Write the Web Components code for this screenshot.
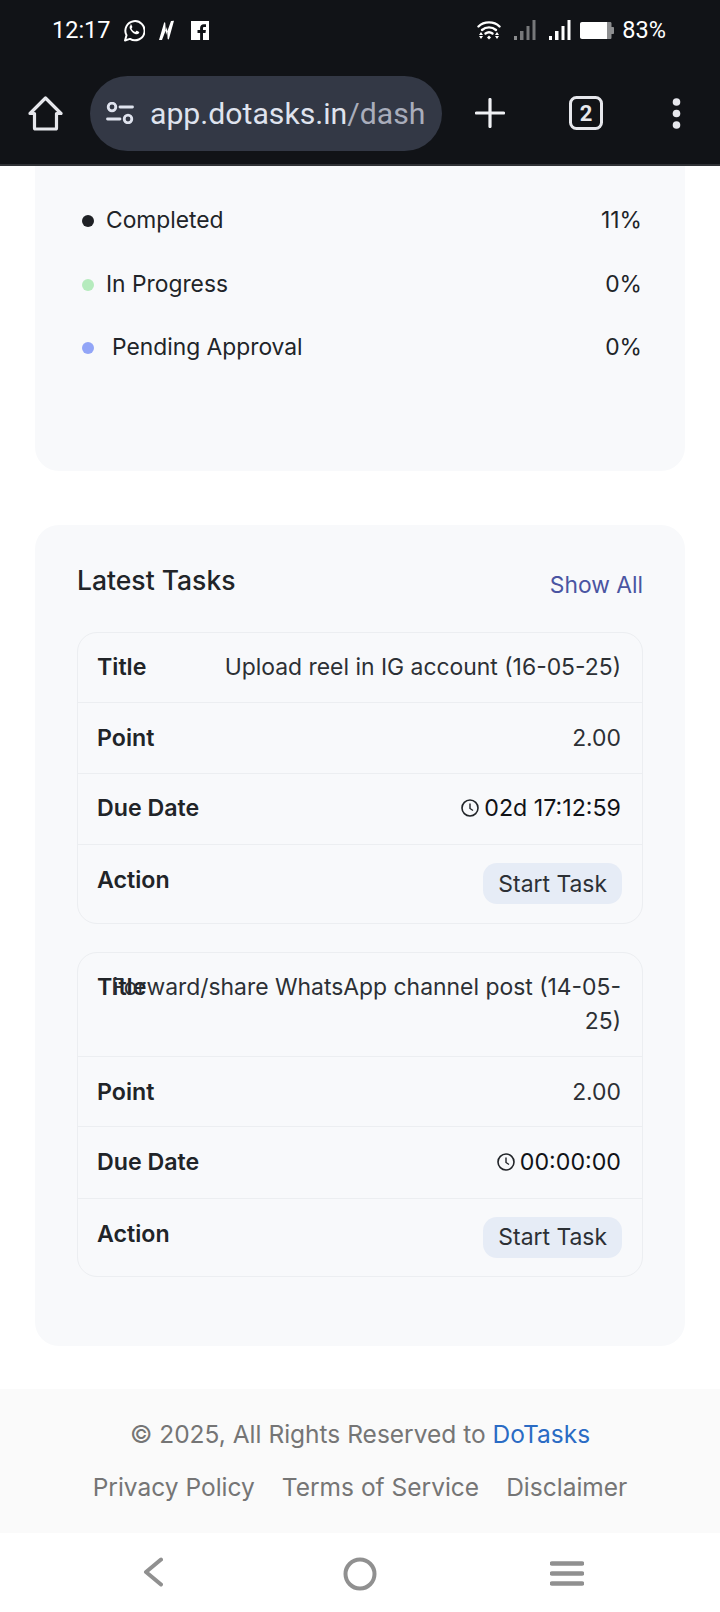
<!DOCTYPE html>
<html>
<head>
<meta charset="utf-8">
<title>DoTasks</title>
<style>
  html, body { margin: 0; padding: 0; background: #fff; }
  body { width: 720px; height: 1612px; overflow: hidden; display: flex; flex-direction: column; font-family: Inter, "Liberation Sans", sans-serif; }
</style>
</head>
<body>
<status-bar></status-bar>
<browser-bar></browser-bar>
<page-main>
  <stat-card class="first">
    <legend-row color="#1f2125" pct="11%">Completed</legend-row>
    <legend-row color="#b5ebbd" pct="0%">In Progress</legend-row>
    <legend-row color="#92a5f7" pct="0%" gap="30">Pending Approval</legend-row>
  </stat-card>
  <tasks-card>
    <task-table>
      <task-row label="Title" kind="title">Upload reel in IG account (16-05-25)</task-row>
      <task-row label="Point" kind="point" h="71">2.00</task-row>
      <task-row label="Due Date" kind="timer" h="71">02d 17:12:59</task-row>
      <task-row label="Action" kind="action">Start Task</task-row>
    </task-table>
    <task-table>
      <task-row label="Title" kind="title">Forward/share WhatsApp channel post (14-05-25)</task-row>
      <task-row label="Point" kind="point" h="70">2.00</task-row>
      <task-row label="Due Date" kind="timer" h="72" style="padding-top:18.500px">00:00:00</task-row>
      <task-row label="Action" kind="action">Start Task</task-row>
    </task-table>
  </tasks-card>
</page-main>
<site-footer></site-footer>
<nav-bar></nav-bar>

<script>
class StatusBar extends HTMLElement {
  constructor() {
    super();
    this.attachShadow({ mode: "open" });
    this.shadowRoot.innerHTML = `
    <style>
      :host { display: flex; align-items: center; height: 62px; padding: 0 54px 2px 52px; background: #111317; color: #fff; font-family: Roboto, sans-serif; font-size: 23.500px; box-sizing: border-box; flex: none; }
      svg { display: block; flex: none; }
      .left, .right { display: flex; align-items: center; }
      .right { margin-left: auto; }
    </style>
    <div class="left">
      <span>12:17</span>
      <svg style="margin-left:12px" width="22" height="23" viewBox="0 0 22 23"><path d="M2 21.500l1.500-5.300A9.600 9.600 0 1 1 7 19.900z" fill="none" stroke="#fff" stroke-width="2" stroke-linejoin="round"/><path d="M7.600 6.200c-1 .8-1.300 2.200-.6 3.800 1 2.300 2.900 4.100 5.100 5 1.600.6 3 .3 3.800-.7.400-.5.400-1 .3-1.300l-2.300-1.200c-.3-.1-.5 0-.7.200l-.8 1c-1.800-.7-3.100-1.900-3.900-3.600l.7-.9c.2-.2.200-.5.100-.7l-1-2.200c-.2-.4-.4-.4-.7-.4z" fill="#fff"/></svg>
      <svg style="margin-left:13px" width="17" height="21" viewBox="0 0 17 21"><path d="M1 20L6 3c.3-1 1.300-.8 1.300.2L8 15 13 1l3-.2-5 18c-.3 1-1.300.8-1.400-.2L9 7 4 20z" fill="#fff"/></svg>
      <svg style="margin-left:16px" width="18" height="19" viewBox="0 0 18 19"><path d="M0 0h18v19H12v-7h2.500l.4-3H12V7.300c0-.8.300-1.300 1.400-1.300H15V3.300c-.3 0-1.200-.1-2.200-.1-2.200 0-3.700 1.300-3.700 3.800V9H6.500v3h2.600v7H0z" fill="#fff"/></svg>
    </div>
    <div class="right">
      <svg width="24" height="20" viewBox="0 0 24 20"><g fill="none" stroke="#fff" stroke-width="2.400" stroke-linecap="round"><path d="M1.500 6.500C7 1 17 1 22.500 6.500"/><path d="M5 10c4-3.500 10-3.500 14 0"/><path d="M8.500 13.500c2-1.500 5-1.500 7 0"/></g><path d="M12 15.500l2 2-2 2-2-2z" fill="#fff"/><path d="M4 12l2 3H2zM4 19l-2-3h4z" fill="#fff"/><path d="M20 12l2 3h-4zM20 19l-2-3h4z" fill="#fff"/></svg>
      <svg style="margin-left:13px" width="22" height="20" viewBox="0 0 22 20"><rect x="0" y="16" width="3" height="4" fill="#8a8b8d"/><rect x="6" y="11" width="3.500" height="9" fill="#77787a"/><rect x="12.500" y="6" width="3" height="14" fill="#77787a"/><rect x="18.500" y="0" width="3" height="20" fill="#77787a"/></svg>
      <svg style="margin-left:13px" width="22" height="20" viewBox="0 0 22 20"><rect x="0" y="16" width="3" height="4" fill="#fff"/><rect x="6" y="11" width="3.500" height="9" fill="#fff"/><rect x="12.500" y="6" width="3" height="14" fill="#fff"/><rect x="18.500" y="0" width="3" height="20" fill="#fff"/></svg>
      <svg style="margin-left:9px" width="34" height="17" viewBox="0 0 34 17"><path d="M27 0h3c1 0 1.500.5 1.500 1.500V5H33c.6 0 1 .4 1 1v5c0 .6-.4 1-1 1h-1.500v3.500c0 1-.5 1.500-1.500 1.500h-3z" fill="#8d8e90"/><path d="M2 0h25v17H2c-1.200 0-2-.8-2-2V2C0 .8.800 0 2 0z" fill="#fff"/></svg>
      <span style="margin-left:8px">83%</span>
    </div>`;
  }
}
customElements.define("status-bar", StatusBar);

class BrowserBar extends HTMLElement {
  constructor() {
    super();
    this.attachShadow({ mode: "open" });
    this.shadowRoot.innerHTML = `
    <style>
      :host { display: flex; align-items: center; height: 104px; flex: none; box-sizing: border-box; padding-left: 28px; background: #111317; border-bottom: 2px solid #303236; }
      svg { display: block; flex: none; }
      .pill { display: flex; align-items: center; width: 352px; height: 75px; box-sizing: border-box; margin-left: 27px; padding-left: 16px; border-radius: 38px; background: #333845; overflow: hidden; flex: none; }
      .url { margin-left: 16px; font: 30.200px Roboto, sans-serif; color: #dfe3ee; white-space: nowrap; }
      .url span { color: #a9adbb; }
    </style>
    <svg width="35" height="35" viewBox="0 0 35 35"><path d="M17.500 2L33 17.500h-4.500V32a1 1 0 0 1-1 1h-20a1 1 0 0 1-1-1V17.500H2z" fill="none" stroke="#e6e7ec" stroke-width="3.200" stroke-linejoin="round"/></svg>
    <div class="pill">
      <svg width="28" height="22" viewBox="0 0 28 22"><g fill="none" stroke="#dfe3ee" stroke-width="2.800" stroke-linecap="round"><circle cx="6" cy="5" r="3.800"/><path d="M14 5h12.500"/><circle cx="22" cy="17" r="3.800"/><path d="M1.500 17H14"/></g></svg>
      <div class="url">app.dotasks.in<span>/dash</span></div>
    </div>
    <svg style="margin-left:33px" width="30" height="30" viewBox="0 0 30 30"><path d="M15 1.500v27M1.500 15h27" stroke="#f0f1f4" stroke-width="3.200" stroke-linecap="round"/></svg>
    <svg style="margin-left:64px" width="34" height="34" viewBox="0 0 34 34"><rect x="1.500" y="1.500" width="31" height="31" rx="6" fill="none" stroke="#e6e7ec" stroke-width="3"/><text x="17" y="25" text-anchor="middle" font-family="Roboto, sans-serif" font-weight="700" font-size="22" fill="#e6e7ec">2</text></svg>
    <svg style="margin-left:69px" width="9" height="31" viewBox="0 0 9 31"><circle cx="4.500" cy="4" r="3.800" fill="#e6e7ec"/><circle cx="4.500" cy="15.500" r="3.800" fill="#e6e7ec"/><circle cx="4.500" cy="27" r="3.800" fill="#e6e7ec"/></svg>`;
  }
}
customElements.define("browser-bar", BrowserBar);

class PageMain extends HTMLElement {
  constructor() {
    super();
    this.attachShadow({ mode: "open" });
    this.shadowRoot.innerHTML = `
    <style>
      :host { display: flex; flex-direction: column; flex: 1; min-height: 0; padding: 0 35px; gap: 54px; }
    </style>
    <slot></slot>`;
  }
}
customElements.define("page-main", PageMain);

class StatCard extends HTMLElement {
  constructor() {
    super();
    this.attachShadow({ mode: "open" });
    this.shadowRoot.innerHTML = `
    <style>
      :host { display: block; height: 305px; box-sizing: border-box; padding: 21.500px 43px 0 47px; background: #f8f9fb; border-radius: 0 0 24px 24px; flex: none; }
    </style>
    <slot></slot>`;
  }
}
customElements.define("stat-card", StatCard);

class LegendRow extends HTMLElement {
  constructor() {
    super();
    this.attachShadow({ mode: "open" });
    const gap = this.getAttribute("gap") || "24";
    this.shadowRoot.innerHTML = `
    <style>
      :host { display: flex; align-items: center; height: 64px; margin-bottom: -0.500px; font: 22.800px Inter, sans-serif; color: #212428; }
      .dot { width: 12px; height: 12px; margin-top: 3px; border-radius: 50%; background: ${this.getAttribute("color")}; flex: none; }
      .name { margin-left: ${gap - 12}px; }
      .pct { margin-left: auto; }
    </style>
    <span class="dot"></span>
    <span class="name"><slot></slot></span>
    <span class="pct">${this.getAttribute("pct")}</span>`;
  }
}
customElements.define("legend-row", LegendRow);

class TasksCard extends HTMLElement {
  constructor() {
    super();
    this.attachShadow({ mode: "open" });
    this.shadowRoot.innerHTML = `
    <style>
      :host { display: block; height: 821px; box-sizing: border-box; padding: 0 42px; background: #f8f9fb; border-radius: 24px; flex: none; }
      .head { display: flex; justify-content: space-between; height: 107px; }
      h2 { margin: 39px 0 0; font: 550 26.500px Inter, sans-serif; color: #212428; }
      a { margin-top: 46px; font: 22.800px Inter, sans-serif; color: #4a55a2; }
      .list { display: flex; flex-direction: column; gap: 28px; }
    </style>
    <div class="head"><h2>Latest Tasks</h2><a>Show All</a></div>
    <div class="list"><slot></slot></div>`;
  }
}
customElements.define("tasks-card", TasksCard);

class TaskTable extends HTMLElement {
  constructor() {
    super();
    this.attachShadow({ mode: "open" });
    this.shadowRoot.innerHTML = `
    <style>
      :host { display: block; border: 1.500px solid #eceef1; border-radius: 20px; }
      ::slotted(task-row:last-child) { border-bottom: 0; }
    </style>
    <slot></slot>`;
  }
}
customElements.define("task-table", TaskTable);

class TaskRow extends HTMLElement {
  constructor() {
    super();
    this.attachShadow({ mode: "open" });
    const kind = this.getAttribute("kind") || "";
    const h = this.getAttribute("h");
    const clock = `<svg width="18" height="18" viewBox="0 0 18 18"><circle cx="9" cy="9" r="8" fill="none" stroke="#212428" stroke-width="1.600"/><path d="M9 4.500V9.500l3 2" fill="none" stroke="#212428" stroke-width="1.400"/></svg>`;
    let value = `<slot></slot>`;
    if (kind == "timer") value = `<span class="timer">${clock}<slot></slot></span>`;
    if (kind == "action") value = `<span class="btn"><slot></slot></span>`;
    this.shadowRoot.innerHTML = `
    <style>
      :host { display: flex; align-items: flex-start; box-sizing: border-box; padding: 18px 21px 0 19px; border-bottom: 1.500px solid #eceef1; font: 22.900px/34px Inter, sans-serif; color: #2c3035; ${h ? "height:" + h + "px;" : ""} }
      :host([kind="title"]) { padding-top: 17px; padding-bottom: 18px; }
      :host([kind="timer"]) { padding-top: 17px; }
      :host([kind="action"]) { padding-bottom: 18.500px; }
      .label { width: 0; white-space: nowrap; font-weight: 600; font-size: 23.200px; color: #212428; }
      .value { flex: 1; margin-left: 10px; text-align: right; }
      .timer { display: inline-flex; align-items: center; gap: 5px; color: #111317; font-size: 23.200px; }
      .btn { display: inline-block; padding: 3.500px 15px; margin-right: -1px; border-radius: 14px; background: #e6ecf6; }
    </style>
    <span class="label">${this.getAttribute("label")}</span>
    <span class="value">${value}</span>`;
  }
}
customElements.define("task-row", TaskRow);

class SiteFooter extends HTMLElement {
  constructor() {
    super();
    this.attachShadow({ mode: "open" });
    this.shadowRoot.innerHTML = `
    <style>
      :host { display: block; flex: none; height: 144px; box-sizing: border-box; padding-top: 28px; background: #fafafa; color: #757575; font: 24.500px/34px Inter, sans-serif; text-align: center; }
      .links { display: flex; justify-content: center; gap: 27px; margin-top: 19px; }
      a { color: #2a6bc4; }
    </style>
    <div>© 2025, All Rights Reserved to <a>DoTasks</a></div>
    <div class="links"><span>Privacy Policy</span><span>Terms of Service</span><span>Disclaimer</span></div>`;
  }
}
customElements.define("site-footer", SiteFooter);

class NavBar extends HTMLElement {
  constructor() {
    super();
    this.attachShadow({ mode: "open" });
    this.shadowRoot.innerHTML = `
    <style>
      :host { display: flex; align-items: flex-start; flex: none; height: 79px; padding: 24px 0 0 143px; box-sizing: border-box; background: #fff; }
      svg { display: block; flex: none; }
    </style>
    <svg width="20" height="30" viewBox="0 0 20 30"><path d="M18 2.500L3 15l15 12.500" fill="none" stroke="#909090" stroke-width="4" stroke-linecap="round" stroke-linejoin="round"/></svg>
    <svg style="margin-left:180px" width="34" height="34" viewBox="0 0 34 34"><circle cx="17" cy="17" r="14.500" fill="none" stroke="#909090" stroke-width="4"/></svg>
    <svg style="margin-left:173px;margin-top:4px" width="34" height="25" viewBox="0 0 34 25"><path d="M2 2.500h30M2 12.500h30M2 22.500h30" fill="none" stroke="#909090" stroke-width="4.500" stroke-linecap="round"/></svg>`;
  }
}
customElements.define("nav-bar", NavBar);
</script>
</body>
</html>
